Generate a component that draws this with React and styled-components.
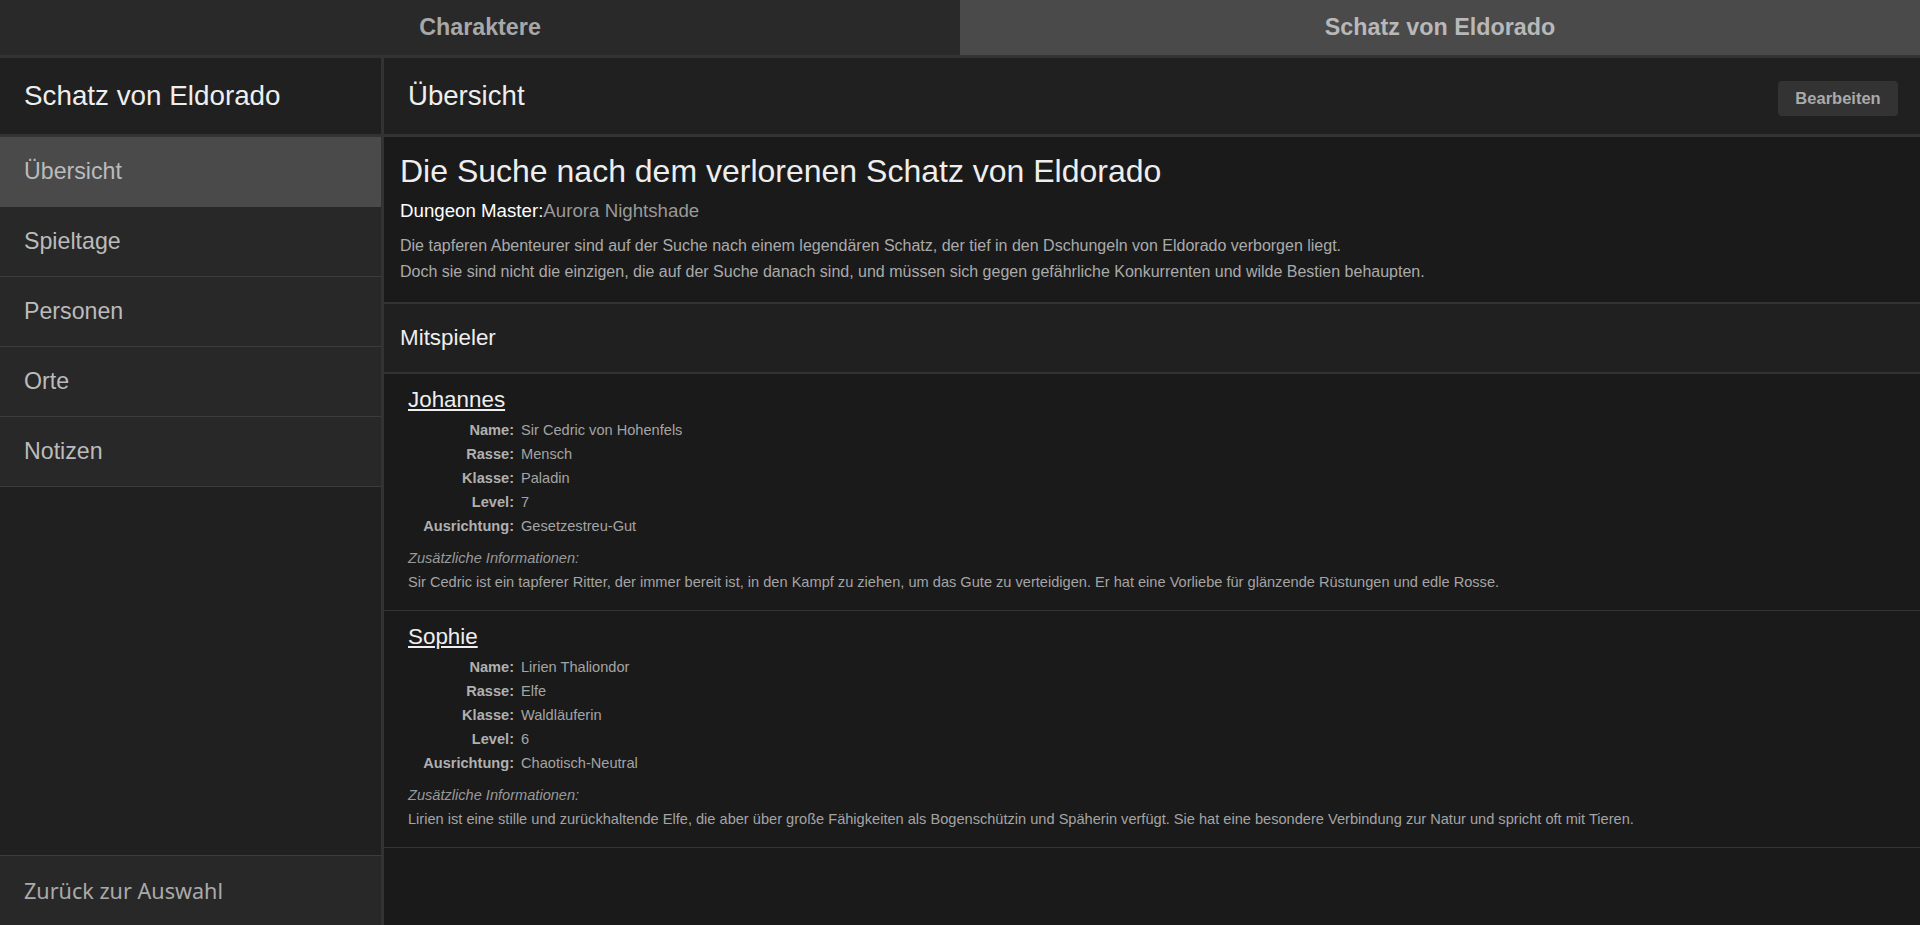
import React from "react";
import { useState } from "react";
import styled, { createGlobalStyle } from "styled-components";

const players = [
    {
        player: "Johannes",
        name: "Sir Cedric von Hohenfels",
        race: "Mensch",
        cls: "Paladin",
        level: 7,
        alignment: "Gesetzestreu-Gut",
        info: "Sir Cedric ist ein tapferer Ritter, der immer bereit ist, in den Kampf zu ziehen, um das Gute zu verteidigen. Er hat eine Vorliebe für glänzende Rüstungen und edle Rosse.",
    },
    {
        player: "Sophie",
        name: "Lirien Thaliondor",
        race: "Elfe",
        cls: "Waldläuferin",
        level: 6,
        alignment: "Chaotisch-Neutral",
        info: "Lirien ist eine stille und zurückhaltende Elfe, die aber über große Fähigkeiten als Bogenschützin und Späherin verfügt. Sie hat eine besondere Verbindung zur Natur und spricht oft mit Tieren.",
    },
];

const navItems = ["Übersicht", "Spieltage", "Personen", "Orte", "Notizen"];

const App = () => {
    const [tab, setTab] = useState(1);
    const [active, setActive] = useState(0);

    return (
        <>
        <GlobalStyle />
        <Page>
            <Tabs>
                <Tab $active={tab === 0} onClick={() => setTab(0)}>Charaktere</Tab>
                <Tab $active={tab === 1} onClick={() => setTab(1)}>Schatz von Eldorado</Tab>
            </Tabs>
            <Body>
                <Sidebar>
                    <SidebarHeader>Schatz von Eldorado</SidebarHeader>
                    {navItems.map((item, i) => (
                        <NavItem key={item} $active={i === active} onClick={() => setActive(i)}>
                            {item}
                        </NavItem>
                    ))}
                    <Spacer />
                    <BackButton>Zurück zur Auswahl</BackButton>
                </Sidebar>
                <Main>
                    <MainHeader>
                        <HeaderTitle>Übersicht</HeaderTitle>
                        <EditButton>Bearbeiten</EditButton>
                    </MainHeader>
                    <Info>
                        <Title>Die Suche nach dem verlorenen Schatz von Eldorado</Title>
                        <Master>
                            Dungeon Master:<MasterName>Aurora Nightshade</MasterName>
                        </Master>
                        <Description>
                            Die tapferen Abenteurer sind auf der Suche nach einem legendären Schatz, der tief in den Dschungeln von Eldorado verborgen liegt.
                            <br />
                            Doch sie sind nicht die einzigen, die auf der Suche danach sind, und müssen sich gegen gefährliche Konkurrenten und wilde Bestien behaupten.
                        </Description>
                    </Info>
                    <SectionHeader>Mitspieler</SectionHeader>
                    {players.map((p) => (
                        <Card key={p.player}>
                            <PlayerName href="#">{p.player}</PlayerName>
                            <Stats>
                                <Label>Name:</Label><Value>{p.name}</Value>
                                <Label>Rasse:</Label><Value>{p.race}</Value>
                                <Label>Klasse:</Label><Value>{p.cls}</Value>
                                <Label>Level:</Label><Value>{p.level}</Value>
                                <Label>Ausrichtung:</Label><Value>{p.alignment}</Value>
                            </Stats>
                            <ExtraLabel>Zusätzliche Informationen:</ExtraLabel>
                            <ExtraText>{p.info}</ExtraText>
                        </Card>
                    ))}
                </Main>
            </Body>
        </Page>
        </>
    );
};

export default App;

const GlobalStyle = createGlobalStyle`
    html, body {
        margin: 0;
        padding: 0;
        background: #1a1a1a;
        font-family: "Liberation Sans", Arial, sans-serif;
    }
    * {
        box-sizing: border-box;
    }
`;

const Page = styled.div`
    height: 100vh;
    display: flex;
    flex-direction: column;
    overflow: hidden;
`;

const Tabs = styled.div`
    display: grid;
    grid-template-columns: 1fr 1fr;
    height: 58px;
    border-bottom: 3px solid #333;
    flex-shrink: 0;
`;

const Tab = styled.div`
    display: flex;
    align-items: center;
    justify-content: center;
    background: ${(p) => (p.$active ? "#4a4a4a" : "#292929")};
    color: ${(p) => (p.$active ? "#b8b8b8" : "#a8a8a8")};
    font-size: 23.3px;
    font-weight: bold;
    cursor: pointer;
`;

const Body = styled.div`
    flex: 1;
    display: flex;
    min-height: 0;
`;

const Sidebar = styled.div`
    width: 384px;
    flex-shrink: 0;
    display: flex;
    flex-direction: column;
    background: #202020;
    border-right: 3px solid #333;
`;

const SidebarHeader = styled.div`
    height: 79px;
    display: flex;
    align-items: center;
    padding: 0 24px;
    border-bottom: 3px solid #333;
    color: #eee;
    font-size: 27.8px;
`;

const NavItem = styled.div`
    height: 70px;
    display: flex;
    align-items: center;
    padding: 0 24px;
    background: ${(p) => (p.$active ? "#4a4a4a" : "#282828")};
    border-bottom: 1px solid ${(p) => (p.$active ? "#4a4a4a" : "#3c3c3c")};
    color: #bbb;
    font-size: 23.2px;
    cursor: pointer;
`;

const Spacer = styled.div`
    flex: 1;
`;

const BackButton = styled.div`
    height: 70px;
    display: flex;
    align-items: center;
    padding: 0 24px;
    background: #282828;
    border-top: 1px solid #3c3c3c;
    color: #aaa;
    font-family: "Noto Sans", "Open Sans", sans-serif;
    font-size: 21.6px;
    cursor: pointer;
`;

const Main = styled.div`
    flex: 1;
    background: #1a1a1a;
    overflow: auto;
`;

const MainHeader = styled.div`
    height: 79px;
    display: flex;
    align-items: center;
    justify-content: space-between;
    padding: 0 22px 0 24px;
    background: #202020;
    border-bottom: 3px solid #333;
`;

const HeaderTitle = styled.div`
    color: #eee;
    font-size: 27.6px;
`;

const EditButton = styled.button`
    width: 120px;
    height: 35px;
    margin-top: 5px;
    background: #333;
    color: #aaa;
    border: none;
    border-radius: 4px;
    font-family: "Liberation Sans", Arial, sans-serif;
    font-weight: bold;
    font-size: 16.5px;
    cursor: pointer;
`;

const Info = styled.div`
    padding: 14px 16px 17px;
    border-bottom: 2px solid #333;
`;

const Title = styled.h1`
    margin: 0;
    font-weight: normal;
    font-size: 32px;
    line-height: 40px;
    color: #eee;
`;

const Master = styled.div`
    margin-top: 8px;
    font-size: 18.7px;
    line-height: 24px;
    color: #fff;
`;

const MasterName = styled.span`
    color: #999;
`;

const Description = styled.p`
    margin: 10px 0 0;
    font-size: 16px;
    line-height: 26px;
    color: #aaa;
`;

const SectionHeader = styled.div`
    height: 70px;
    display: flex;
    align-items: center;
    padding: 0 16px;
    background: #202020;
    border-bottom: 2px solid #333;
    color: #eee;
    font-size: 22.4px;
`;

const Card = styled.div`
    padding: 12px 24px 18px;
    border-bottom: 1px solid #333;
`;

const PlayerName = styled.a`
    display: inline-block;
    font-size: 22.4px;
    line-height: 28px;
    color: #eee;
    text-decoration: underline;
`;

const Stats = styled.div`
    display: grid;
    grid-template-columns: 106px 1fr;
    column-gap: 7px;
    margin-top: 4px;
    font-size: 14.6px;
    line-height: 24px;
`;

const Label = styled.span`
    text-align: right;
    font-weight: bold;
    color: #b0b0b0;
`;

const Value = styled.span`
    color: #a4a4a4;
`;

const ExtraLabel = styled.div`
    margin-top: 10px;
    font-size: 14.6px;
    line-height: 20px;
    font-style: italic;
    color: #999;
`;

const ExtraText = styled.div`
    margin-top: 4px;
    font-size: 14.6px;
    line-height: 20px;
    color: #a4a4a4;
`;
